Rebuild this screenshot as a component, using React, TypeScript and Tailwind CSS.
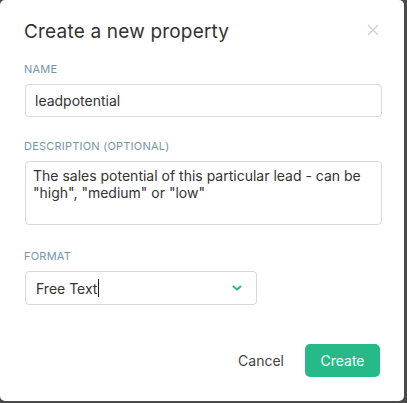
import { useState } from "react";

const font = { fontFamily: "Inter, 'Noto Sans', sans-serif" };

function Label({ children }: { children: React.ReactNode }) {
  return (
    <p className="text-[11px] leading-none tracking-[0.02em] text-[#7596a8] mb-[9px]">
      {children}
    </p>
  );
}

export default function App() {
  const [name, setName] = useState("leadpotential");
  const [desc, setDesc] = useState(
    'The sales potential of this particular lead - can be "high", "medium" or "low"'
  );

  return (
    <div className="w-[407px] h-[403px] bg-[#4a4a4a]" style={font}>
      <div className="w-[404px] h-[401px] bg-white rounded-[5px] px-6 pt-[20px] flex flex-col">
        <div className="flex items-start justify-between">
          <h2 className="text-[19px] leading-[24px] text-[#333] tracking-[0.01em]">
            Create a new property
          </h2>
          <button className="mt-[4px] mr-[1px] text-[#cfcfcf]">
            <svg width="12" height="12" viewBox="0 0 12 12" fill="none" stroke="currentColor" strokeWidth="1.4">
              <path d="M1 1l10 10M11 1L1 11" />
            </svg>
          </button>
        </div>

        <div className="mt-[20px]">
          <Label>NAME</Label>
          <input
            value={name}
            onChange={(e) => setName(e.currentTarget.value)}
            className="w-[357px] h-[33px] ml-[1px] rounded-[4px] border border-[#d9d9d9] px-[9px] text-[14px] text-[#333] outline-none"
          />
        </div>

        <div className="mt-[24px]">
          <Label>DESCRIPTION (OPTIONAL)</Label>
          <textarea
            value={desc}
            onChange={(e) => setDesc(e.currentTarget.value)}
            className="w-[357px] h-[64px] ml-[1px] rounded-[4px] border border-[#d9d9d9] px-[7px] py-[5px] text-[14px] leading-[17px] text-[#333] resize-none outline-none block"
          />
        </div>

        <div className="mt-[26px]">
          <Label>FORMAT</Label>
          <div className="w-[232px] h-[34px] ml-[1px] rounded-[4px] border border-[#d9d9d9] pl-[10px] pr-[14px] flex items-center justify-between">
            <span className="text-[14px] text-[#333] flex items-center">
              Free Text
              <span className="inline-block w-px h-[18px] bg-[#222] ml-[1px]" />
            </span>
            <svg width="10" height="6" viewBox="0 0 10 6" fill="none" stroke="#27b987" strokeWidth="2" strokeLinecap="round" strokeLinejoin="round">
              <path d="M1.5 1.5L5 4.5l3.5-3" />
            </svg>
          </div>
        </div>

        <div className="mt-auto mb-[24px] flex items-center justify-end gap-[21px]">
          <button className="text-[14px] text-[#444]">Cancel</button>
          <button className="w-[75px] h-[33px] rounded-[5px] bg-[#27ba89] text-white text-[14px]">
            Create
          </button>
        </div>
      </div>
    </div>
  );
}
